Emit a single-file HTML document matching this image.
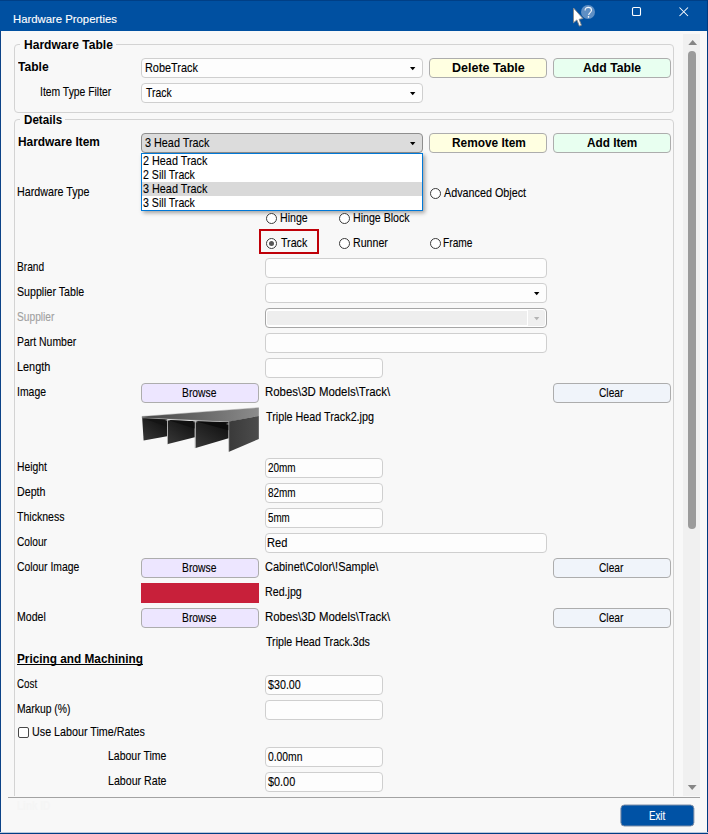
<!DOCTYPE html>
<html>
<head>
<meta charset="utf-8">
<title>Hardware Properties</title>
<style>
*{box-sizing:border-box;margin:0;padding:0}
html,body{width:708px;height:834px;overflow:hidden;background:#f8f8f8}
body{font-family:"Liberation Sans",sans-serif;font-size:13px;color:#000;position:relative}
#win{position:absolute;left:0;top:0;width:708px;height:834px;background:#f8f8f8;overflow:hidden}
#win>div,#win>span,#win>svg{position:absolute}
.tx{white-space:nowrap;transform-origin:0 0;display:block;-webkit-text-stroke:0.12px currentColor}
.b{-webkit-text-stroke:0}
.b{font-weight:bold}
.grp{border:1px solid #d3d3d3;border-radius:4px}
.mask{background:#f8f8f8}
.inp{height:20px;background:#fdfdfd;border:1px solid #cfcfcf;border-radius:4px}
.btn{height:20px;border:1px solid #adadad;border-radius:4px}
.arr{width:0;height:0;border-left:2.75px solid transparent;border-right:2.75px solid transparent;border-top:3.3px solid #000}
.rad{width:11px;height:11px;border:1px solid #3a3a3a;border-radius:50%;background:#fff}
</style>
</head>
<body>
<div id="win">
<!-- group boxes -->
<div class="grp" style="left:14px;top:44px;width:660px;height:69px"></div>
<div class="grp" style="left:14px;top:119px;width:660px;height:700px"></div>
<div class="mask" style="left:20px;top:40px;width:96px;height:12px"></div>
<div class="mask" style="left:20px;top:115px;width:45px;height:12px"></div>
<!-- bottom area -->
<div class="mask" style="left:1px;top:796px;width:706px;height:37px"></div>
<div style="left:8px;top:797px;width:692px;height:1px;background:#a3a3a3"></div>
<!-- scrollbar -->
<div style="left:683px;top:34px;width:17px;height:762px;background:#f0f0f0"></div>
<div style="left:688px;top:51px;width:8px;height:478px;border-radius:4px;background:#9b9b9b"></div>
<svg style="left:683px;top:34px" width="17" height="762" viewBox="0 0 17 762"><path d="M5.3 11 L9.7 6 L14.1 11 Z" fill="#858585"/><path d="M4.8 751 L13.6 751 L9.2 756 Z" fill="#858585"/></svg>
<!-- title bar -->
<div style="left:0;top:0;width:708px;height:31px;background:#0050a1"></div>
<div style="left:581px;top:5px;width:14px;height:14px;border-radius:50%;background:#5f8fc4"></div>
<svg style="left:560px;top:0" width="148" height="30" viewBox="0 0 148 30">
  <path d="M25.1 10.5 C25 8.4 26.5 7.4 28.3 7.4 C30.2 7.4 31.5 8.5 31.5 10.2 C31.5 12.4 28.7 12.7 28.6 15.1" fill="none" stroke="#fff" stroke-width="1.15" stroke-opacity="0.92"/>
  <circle cx="28.5" cy="16.9" r="0.8" fill="#fff"/>
  <path d="M13.5 8 L13.5 22.7 L16.9 19.9 L19.4 26.1 L21.4 25.2 L19.1 19.3 L22.9 18.5 Z" fill="#fff" stroke="#8a8a8a" stroke-width="0.9" stroke-linejoin="round"/>
  <rect x="72.5" y="7.5" width="8" height="8" rx="1.3" fill="none" stroke="#fff" stroke-width="1.1"/>
  <path d="M119.5 7.5 L128 16 M128 7.5 L119.5 16" stroke="#fff" stroke-width="1.05" fill="none"/>
</svg>
<!-- window borders -->
<div style="left:0;top:0;width:708px;height:1px;background:#003f86"></div>
<div style="left:0;top:31px;width:1px;height:803px;background:#0c4388"></div>
<div style="left:707px;top:0;width:1px;height:834px;background:#003a80"></div>
<div style="left:0;top:832px;width:708px;height:1px;background:#b9c8dc"></div>
<div style="left:0;top:833px;width:708px;height:1px;background:#003d84"></div>
<!-- group 1 controls -->
<div class="inp" style="left:141px;top:58px;width:282px"></div><svg style="left:410px;top:67px" width="7" height="4" viewBox="0 0 7 4"><path d="M0 0 L5.4 0 L2.7 3.3 Z" fill="#000"/></svg>
<div class="inp" style="left:141px;top:83px;width:282px"></div><svg style="left:410px;top:92px" width="7" height="4" viewBox="0 0 7 4"><path d="M0 0 L5.4 0 L2.7 3.3 Z" fill="#000"/></svg>
<div class="btn" style="left:429px;top:58px;width:118px;background:#ffffe1"></div>
<div class="btn" style="left:553px;top:58px;width:118px;background:#e8fff0"></div>
<!-- group 2 top row -->
<div class="inp" style="left:141px;top:133px;width:282px;background:#dcdcdc;border-color:#8e8e8e"></div><svg style="left:410px;top:142px" width="7" height="4" viewBox="0 0 7 4"><path d="M0 0 L5.4 0 L2.7 3.3 Z" fill="#000"/></svg>
<div class="btn" style="left:429px;top:133px;width:118px;background:#ffffe1"></div>
<div class="btn" style="left:553px;top:133px;width:118px;background:#e8fff0"></div>
<!-- dropdown list -->
<div style="left:141px;top:153px;width:282px;height:58px;background:#fff;border:1px solid #0078d7;box-shadow:2px 2px 4px rgba(0,0,0,.35)"></div>
<div style="left:142px;top:182px;width:280px;height:14px;background:#d9d9d9"></div>
<!-- radios -->
<div class="rad" style="left:430px;top:188px"></div>
<div class="rad" style="left:266px;top:213px"></div>
<div class="rad" style="left:339px;top:213px"></div>
<div style="left:259px;top:229px;width:60px;height:25px;border:2px solid #bf0008"></div>
<div class="rad" style="left:266px;top:238px"></div><div style="left:269px;top:241px;width:5px;height:5px;border-radius:50%;background:#565656"></div>
<div class="rad" style="left:339px;top:238px"></div>
<div class="rad" style="left:430px;top:238px"></div>
<!-- inputs -->
<div class="inp" style="left:265px;top:258px;width:282px"></div>
<div class="inp" style="left:265px;top:283px;width:282px"></div><svg style="left:534px;top:292px" width="7" height="4" viewBox="0 0 7 4"><path d="M0 0 L5.4 0 L2.7 3.3 Z" fill="#000"/></svg>
<div class="inp" style="left:265px;top:308px;width:282px;border-color:#a6a6a6;background:#fff"></div>
<div style="left:267px;top:311px;width:260px;height:14px;background:#eeeeee;border-radius:2px 0 0 2px"></div>
<div style="left:528px;top:310px;width:17px;height:16px;background:#efefef;border-radius:0 3px 3px 0"></div>
<svg style="left:534px;top:317px" width="7" height="4" viewBox="0 0 7 4"><path d="M0 0 L5.4 0 L2.7 3.3 Z" fill="#b4b4b4"/></svg>
<div class="inp" style="left:265px;top:333px;width:282px"></div>
<div class="inp" style="left:265px;top:358px;width:118px"></div>
<div class="btn" style="left:141px;top:383px;width:118px;background:#ede6ff"></div>
<div class="btn" style="left:553px;top:383px;width:118px;background:#f0f4fa"></div>
<!-- track image -->
<svg style="left:138px;top:404px" width="124" height="52" viewBox="0 0 708 297">
  <defs>
    <linearGradient id="gt" x1="0" y1="0" x2="1" y2="0"><stop offset="0" stop-color="#444444"/><stop offset="0.5" stop-color="#686868"/><stop offset="1" stop-color="#8c8c8c"/></linearGradient>
    <linearGradient id="gs" x1="0" y1="0" x2="1" y2="0"><stop offset="0" stop-color="#3a3a3a"/><stop offset="1" stop-color="#4c4c4c"/></linearGradient>
    <linearGradient id="gp" x1="1" y1="0" x2="0.2" y2="1"><stop offset="0" stop-color="#0c0c0c"/><stop offset="0.45" stop-color="#1e1e1e"/><stop offset="1" stop-color="#343434"/></linearGradient>
  </defs>
  <polygon points="22,71 690,21 690,69 520,101 22,79" fill="url(#gt)"/>
  <polygon points="520,100 690,68 690,200 520,273" fill="url(#gs)"/>
  <polygon points="24,80 166,88 166,184 32,209" fill="url(#gp)"/>
  <polygon points="171,91 324,98 324,190 171,229" fill="url(#gp)"/>
  <polygon points="329,99 517,104 517,196 329,251" fill="url(#gp)"/>
  <polygon points="24,80 166,88 166,128" fill="#141414"/>
  <polygon points="171,91 324,98 324,140" fill="#101010"/>
  <polygon points="329,99 517,104 517,150" fill="#0c0c0c"/>
  <path d="M168.500 88 L168.500 230 M326.500 98 L326.500 252 M518.500 102 L518.500 273" stroke="#8e8e8e" stroke-width="3.5"/>
  <path d="M22 79 L520 101" stroke="#8a8a8a" stroke-width="3"/>
  <path d="M22 71 L690 21" stroke="#9a9a9a" stroke-width="2.5"/>
  <path d="M158 92 L180 93 M316 101 L338 102 M506 114 L520 114" stroke="#c8c8c8" stroke-width="4"/>
</svg>
<div class="inp" style="left:265px;top:458px;width:118px"></div>
<div class="inp" style="left:265px;top:483px;width:118px"></div>
<div class="inp" style="left:265px;top:508px;width:118px"></div>
<div class="inp" style="left:265px;top:533px;width:282px"></div>
<div class="btn" style="left:141px;top:558px;width:118px;background:#ede6ff"></div>
<div class="btn" style="left:553px;top:558px;width:118px;background:#f0f4fa"></div>
<div style="left:141px;top:583px;width:118px;height:20px;background:#c8203a"></div>
<div class="btn" style="left:141px;top:608px;width:118px;background:#ede6ff"></div>
<div class="btn" style="left:553px;top:608px;width:118px;background:#f0f4fa"></div>
<div style="left:17px;top:664px;width:126px;height:1px;background:#000"></div>
<div class="inp" style="left:265px;top:675px;width:118px"></div>
<div class="inp" style="left:265px;top:700px;width:118px"></div>
<div style="left:18px;top:727px;width:11px;height:11px;border:1px solid #484848;border-radius:2px;background:#fff"></div>
<div class="inp" style="left:265px;top:747px;width:118px"></div>
<div class="inp" style="left:265px;top:772px;width:118px"></div>
<!-- exit -->
<div style="left:620px;top:805px;width:74px;height:22px;background:#0052a5;border:1px solid #7f8fa8;border-radius:4px;transform:translate(0.4px,-0.5px)"></div>
<span class="tx b" style="left:23.90px;top:37.0px;font-size:13px;line-height:15px;color:#000;transform:scaleX(0.9276);">Hardware Table</span>
<span class="tx b" style="left:23.90px;top:112.0px;font-size:13px;line-height:15px;color:#000;transform:scaleX(0.8938);">Details</span>
<span class="tx b" style="left:18.30px;top:59.0px;font-size:13px;line-height:15px;color:#000;transform:scaleX(0.9310);">Table</span>
<span class="tx b" style="left:17.60px;top:134.0px;font-size:13px;line-height:15px;color:#000;transform:scaleX(0.9143);">Hardware Item</span>
<span class="tx b" style="left:451.60px;top:60.0px;font-size:13px;line-height:15px;color:#000;transform:scaleX(0.9617);">Delete Table</span>
<span class="tx b" style="left:583.40px;top:60.0px;font-size:13px;line-height:15px;color:#000;transform:scaleX(0.9393);">Add Table</span>
<span class="tx b" style="left:451.60px;top:135.0px;font-size:13px;line-height:15px;color:#000;transform:scaleX(0.9121);">Remove Item</span>
<span class="tx b" style="left:587.00px;top:135.0px;font-size:13px;line-height:15px;color:#000;transform:scaleX(0.9046);">Add Item</span>
<span class="tx b" style="left:17.10px;top:651.0px;font-size:13px;line-height:15px;color:#000;transform:scaleX(0.9075);">Pricing and Machining</span>
<span class="tx" style="left:39.90px;top:84.0px;font-size:13px;line-height:15px;color:#000;transform:scaleX(0.7978);">Item Type Filter</span>
<span class="tx" style="left:16.78px;top:184.0px;font-size:13px;line-height:15px;color:#000;transform:scaleX(0.8249);">Hardware Type</span>
<span class="tx" style="left:16.82px;top:259.0px;font-size:13px;line-height:15px;color:#000;transform:scaleX(0.7830);">Brand</span>
<span class="tx" style="left:17.10px;top:284.0px;font-size:13px;line-height:15px;color:#000;transform:scaleX(0.8180);">Supplier Table</span>
<span class="tx" style="left:17.10px;top:309.0px;font-size:13px;line-height:15px;color:#a0a0a0;transform:scaleX(0.7836);">Supplier</span>
<span class="tx" style="left:16.80px;top:334.0px;font-size:13px;line-height:15px;color:#000;transform:scaleX(0.8029);">Part Number</span>
<span class="tx" style="left:16.76px;top:359.0px;font-size:13px;line-height:15px;color:#000;transform:scaleX(0.8383);">Length</span>
<span class="tx" style="left:16.80px;top:384.0px;font-size:13px;line-height:15px;color:#000;transform:scaleX(0.8023);">Image</span>
<span class="tx" style="left:16.80px;top:459.0px;font-size:13px;line-height:15px;color:#000;transform:scaleX(0.7980);">Height</span>
<span class="tx" style="left:16.78px;top:484.0px;font-size:13px;line-height:15px;color:#000;transform:scaleX(0.8219);">Depth</span>
<span class="tx" style="left:17.40px;top:509.0px;font-size:13px;line-height:15px;color:#000;transform:scaleX(0.8116);">Thickness</span>
<span class="tx" style="left:16.60px;top:534.0px;font-size:13px;line-height:15px;color:#000;transform:scaleX(0.7827);">Colour</span>
<span class="tx" style="left:16.60px;top:559.0px;font-size:13px;line-height:15px;color:#000;transform:scaleX(0.7981);">Colour Image</span>
<span class="tx" style="left:16.79px;top:609.0px;font-size:13px;line-height:15px;color:#000;transform:scaleX(0.8111);">Model</span>
<span class="tx" style="left:16.60px;top:676.0px;font-size:13px;line-height:15px;color:#000;transform:scaleX(0.7523);">Cost</span>
<span class="tx" style="left:16.80px;top:701.0px;font-size:13px;line-height:15px;color:#000;transform:scaleX(0.7958);">Markup (%)</span>
<span class="tx" style="left:32.07px;top:724.0px;font-size:13px;line-height:15px;color:#000;transform:scaleX(0.8261);">Use Labour Time/Rates</span>
<span class="tx" style="left:107.89px;top:748.0px;font-size:13px;line-height:15px;color:#000;transform:scaleX(0.8068);">Labour Time</span>
<span class="tx" style="left:107.88px;top:773.0px;font-size:13px;line-height:15px;color:#000;transform:scaleX(0.8177);">Labour Rate</span>
<span class="tx" style="left:444.00px;top:185.0px;font-size:13px;line-height:15px;color:#000;transform:scaleX(0.8290);">Advanced Object</span>
<span class="tx" style="left:279.68px;top:210.0px;font-size:13px;line-height:15px;color:#000;transform:scaleX(0.8156);">Hinge</span>
<span class="tx" style="left:352.68px;top:210.0px;font-size:13px;line-height:15px;color:#000;transform:scaleX(0.8161);">Hinge Block</span>
<span class="tx" style="left:280.50px;top:235.0px;font-size:13px;line-height:15px;color:#000;transform:scaleX(0.8211);">Track</span>
<span class="tx" style="left:352.68px;top:235.0px;font-size:13px;line-height:15px;color:#000;transform:scaleX(0.8178);">Runner</span>
<span class="tx" style="left:443.22px;top:235.0px;font-size:13px;line-height:15px;color:#000;transform:scaleX(0.7845);">Frame</span>
<span class="tx" style="left:264.92px;top:384.0px;font-size:13px;line-height:15px;color:#000;transform:scaleX(0.8777);">Robes\3D Models\Track\</span>
<span class="tx" style="left:265.80px;top:409.0px;font-size:13px;line-height:15px;color:#000;transform:scaleX(0.8288);">Triple Head Track2.jpg</span>
<span class="tx" style="left:264.70px;top:559.0px;font-size:13px;line-height:15px;color:#000;transform:scaleX(0.8436);">Cabinet\Color\!Sample\</span>
<span class="tx" style="left:264.98px;top:583.5px;font-size:13px;line-height:15px;color:#000;transform:scaleX(0.8215);">Red.jpg</span>
<span class="tx" style="left:264.92px;top:609.0px;font-size:13px;line-height:15px;color:#000;transform:scaleX(0.8777);">Robes\3D Models\Track\</span>
<span class="tx" style="left:265.80px;top:634.0px;font-size:13px;line-height:15px;color:#000;transform:scaleX(0.8202);">Triple Head Track.3ds</span>
<span class="tx" style="left:144.96px;top:60.0px;font-size:13px;line-height:15px;color:#000;transform:scaleX(0.8371);">RobeTrack</span>
<span class="tx" style="left:145.80px;top:85.0px;font-size:13px;line-height:15px;color:#000;transform:scaleX(0.7996);">Track</span>
<span class="tx" style="left:145.30px;top:135.0px;font-size:13px;line-height:15px;color:#000;transform:scaleX(0.8328);">3 Head Track</span>
<span class="tx" style="left:268.30px;top:459.5px;font-size:13px;line-height:15px;color:#000;transform:scaleX(0.7651);">20mm</span>
<span class="tx" style="left:268.30px;top:484.5px;font-size:13px;line-height:15px;color:#000;transform:scaleX(0.7651);">82mm</span>
<span class="tx" style="left:268.30px;top:509.5px;font-size:13px;line-height:15px;color:#000;transform:scaleX(0.7520);">5mm</span>
<span class="tx" style="left:267.45px;top:534.5px;font-size:13px;line-height:15px;color:#000;transform:scaleX(0.8533);">Red</span>
<span class="tx" style="left:268.30px;top:676.5px;font-size:13px;line-height:15px;color:#000;transform:scaleX(0.8247);">$30.00</span>
<span class="tx" style="left:268.30px;top:749.0px;font-size:13px;line-height:15px;color:#000;transform:scaleX(0.7953);">0.00mn</span>
<span class="tx" style="left:268.30px;top:774.0px;font-size:13px;line-height:15px;color:#000;transform:scaleX(0.8359);">$0.00</span>
<span class="tx" style="left:143.30px;top:153.0px;font-size:13px;line-height:15px;color:#000;transform:scaleX(0.8328);">2 Head Track</span>
<span class="tx" style="left:143.30px;top:167.0px;font-size:13px;line-height:15px;color:#000;transform:scaleX(0.8164);">2 Sill Track</span>
<span class="tx" style="left:143.30px;top:181.0px;font-size:13px;line-height:15px;color:#000;transform:scaleX(0.8328);">3 Head Track</span>
<span class="tx" style="left:143.30px;top:195.0px;font-size:13px;line-height:15px;color:#000;transform:scaleX(0.8164);">3 Sill Track</span>
<span class="tx" style="left:181.70px;top:385.0px;font-size:13px;line-height:15px;color:#000;transform:scaleX(0.7954);">Browse</span>
<span class="tx" style="left:181.70px;top:560.0px;font-size:13px;line-height:15px;color:#000;transform:scaleX(0.7954);">Browse</span>
<span class="tx" style="left:181.70px;top:610.0px;font-size:13px;line-height:15px;color:#000;transform:scaleX(0.7954);">Browse</span>
<span class="tx" style="left:599.30px;top:385.0px;font-size:13px;line-height:15px;color:#000;transform:scaleX(0.7846);">Clear</span>
<span class="tx" style="left:599.30px;top:560.0px;font-size:13px;line-height:15px;color:#000;transform:scaleX(0.7846);">Clear</span>
<span class="tx" style="left:599.30px;top:610.0px;font-size:13px;line-height:15px;color:#000;transform:scaleX(0.7846);">Clear</span>
<span class="tx" style="left:648.85px;top:808.0px;font-size:13px;line-height:15px;color:#fff;transform:scaleX(0.7455);">Exit</span>
<span class="tx b" style="left:17.00px;top:798.0px;font-size:13px;line-height:15px;color:#f5f5f5;transform:scaleX(0.7684);">Link ID</span>
<span class="tx" style="left:12.50px;top:11.6px;font-size:11.5px;line-height:14px;color:#fff;transform:scaleX(0.9848);">Hardware Properties</span>
</div>
</body>
</html>
